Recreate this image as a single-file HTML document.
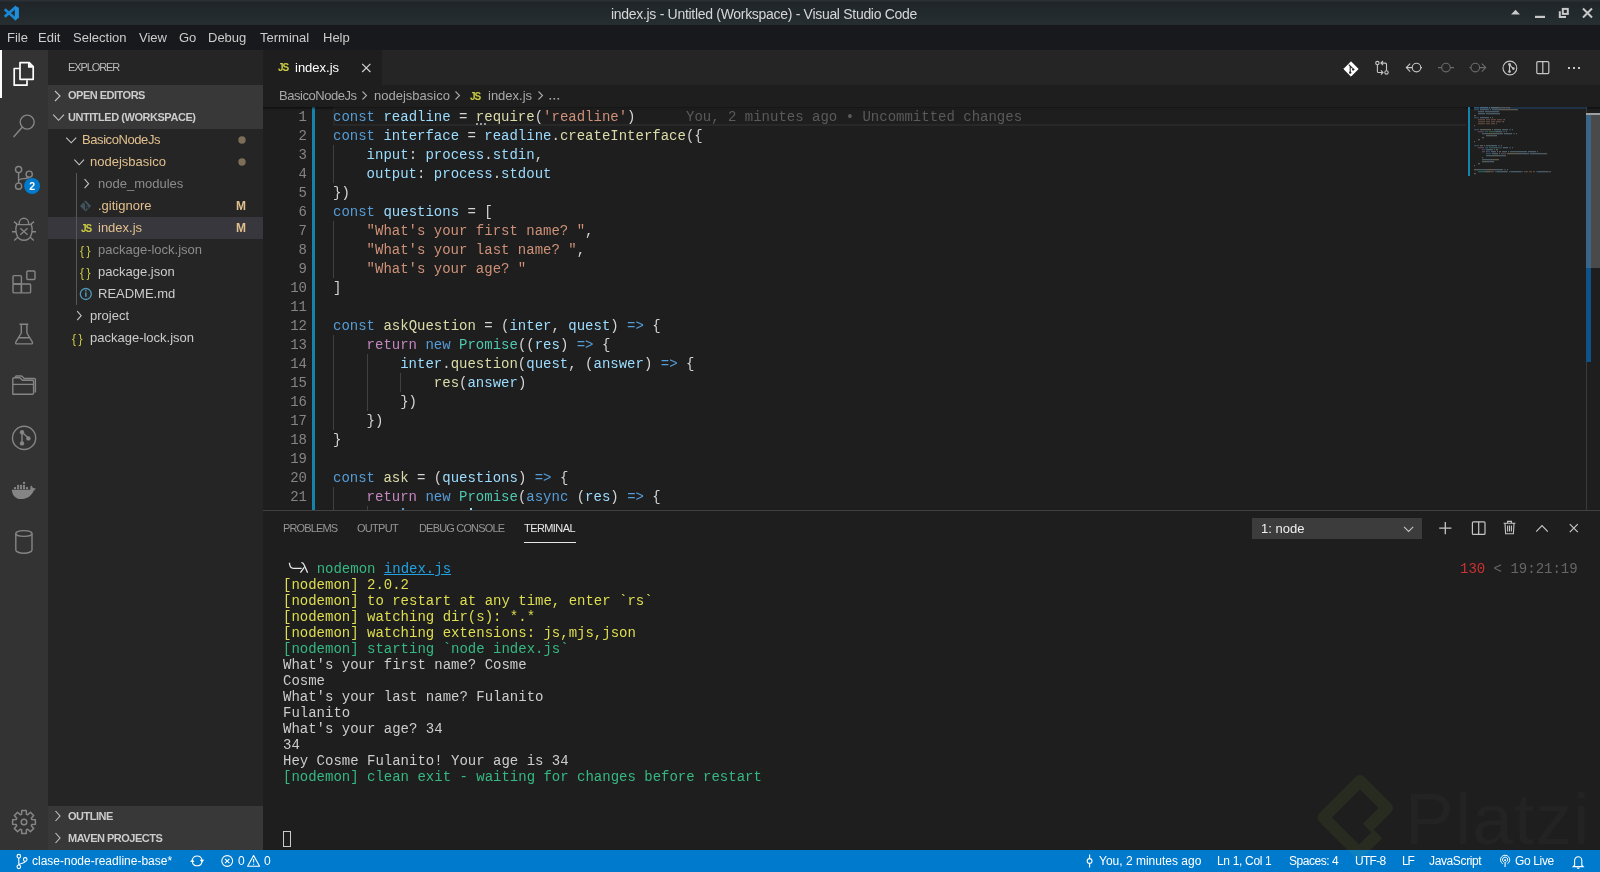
<!DOCTYPE html>
<html><head><meta charset="utf-8">
<style>
*{margin:0;padding:0;box-sizing:border-box}
html,body{width:1600px;height:872px;overflow:hidden;background:#1e1e1e;font-family:"Liberation Sans",sans-serif;color:#ccc}
.a{position:absolute;white-space:pre}
body>div{will-change:transform}
#title{left:0;top:0;width:1600px;height:25px;background:linear-gradient(#2a3035 0,#2a3035 1px,#1f2528 2px,#262e32 100%)}
#menu{left:0;top:25px;width:1600px;height:25px;background:#18191c;font-size:13px;color:#cccccc}
#act{left:0;top:50px;width:48px;height:800px;background:#333333}
#side{left:48px;top:50px;width:215px;height:800px;background:#252526;overflow:hidden}
#tabs{left:263px;top:50px;width:1337px;height:35px;background:#252526}
#crumbs{left:263px;top:85px;width:1337px;height:22px;background:#1e1e1e}
#code{left:263px;top:107px;width:1337px;height:403px;background:#1e1e1e;overflow:hidden}
#panel{left:263px;top:510px;width:1337px;height:340px;background:#1e1e1e;overflow:hidden}
#status{left:0;top:850px;width:1600px;height:22px;background:#007acc;color:#fff;font-size:12px}
.hdr{font-size:11px;font-weight:bold;color:#cccccc}
.row{font-size:13px;line-height:22px;height:22px}
.mod{color:#e2c08d}.ign{color:#8c8c8c}
.ln{position:absolute;left:0;width:44px;text-align:right;color:#858585;font-size:14px;line-height:19px;font-family:"Liberation Mono",monospace}
.cl{position:absolute;left:70px;white-space:pre;font-size:14px;line-height:19px;font-family:"Liberation Mono",monospace;color:#d4d4d4}
.k{color:#569cd6}.v{color:#9cdcfe}.s{color:#ce9178}.f{color:#dcdcaa}.c{color:#c586c0}.t{color:#4ec9b0}
.tl{position:absolute;left:20px;white-space:pre;font-size:14px;line-height:16px;font-family:"Liberation Mono",monospace;color:#cccccc}
.y{color:#dede50}.g{color:#35b882}.bl{color:#22a1e0;text-decoration:underline}
.guide{position:absolute;width:1px;background:#404040}
</style></head><body>
<div id="title" class="a">
<svg class="a" style="left:0;top:0" width="25" height="25"><path d="M5.8 10.2 L15.4 18.8 M5.8 15.8 L15.4 7.4" stroke="#1b86d2" stroke-width="2.7" stroke-linecap="square"/><path d="M14.8 6 L18.9 7.7 V17.9 L14.8 19.8Z" fill="#1f8fdc"/></svg>
<span class="a" style="left:611px;top:6px;font-size:14px;letter-spacing:-0.3px;color:#d6d6d6">index.js - Untitled (Workspace) - Visual Studio Code</span>
<svg class="a" style="left:0;top:0" width="1600" height="25">
<path d="M1511 14.5 L1515.5 9.8 L1520 14.5Z" fill="#c8c8c8"/>
<rect x="1535" y="15.8" width="10" height="2.2" fill="#c8c8c8"/>
<path d="M1558.8 11.3 V18 H1566 V16 H1560.8 V11.3Z" fill="#c8c8c8"/>
<rect x="1562.8" y="8.9" width="5" height="5" fill="none" stroke="#c8c8c8" stroke-width="2"/>
<path d="M1583 8.5 L1592 17.5 M1592 8.5 L1583 17.5" stroke="#c8c8c8" stroke-width="2"/>
</svg>
</div>
<div id="menu" class="a">
<span class="a" style="left:7px;top:5px">File</span><span class="a" style="left:38px;top:5px">Edit</span><span class="a" style="left:73px;top:5px">Selection</span><span class="a" style="left:139px;top:5px">View</span><span class="a" style="left:179px;top:5px">Go</span><span class="a" style="left:208px;top:5px">Debug</span><span class="a" style="left:260px;top:5px">Terminal</span><span class="a" style="left:323px;top:5px">Help</span>
</div>
<div id="act" class="a">
<div class="a" style="left:0;top:0;width:2px;height:48px;background:#ffffff"></div>
<svg class="a" style="left:0;top:-50px" width="48" height="850" fill="none" stroke="#858585" stroke-width="1.4">
<!-- files -->
<g stroke="#ffffff" stroke-width="1.7" stroke-linejoin="round">
<path d="M19.6 68.5 H14.2 V85.2 H27 V80.2"/>
<path d="M20 62.6 H29.2 L33.2 66.6 V79.3 H20 Z"/>
<path d="M28.8 62.8 V66.9 H33"/><path d="M29.6 64.6 V66.1 H31.1Z" fill="#ffffff" stroke-width="0.8"/>
</g>
<!-- search -->
<circle cx="27.2" cy="122.1" r="7"/>
<path d="M22.2 127.3 L14 136.6" stroke-width="1.5" stroke-linecap="round"/>
<!-- scm -->
<circle cx="18.6" cy="169.6" r="3.1"/>
<circle cx="29.2" cy="174.2" r="3.1"/>
<circle cx="18.6" cy="186.2" r="3.1"/>
<path d="M18.6 172.7 V183.1 M18.6 181 C19 178.5 22 178.8 25.5 178.5 C27.5 178.3 28.8 177.8 29.2 177.3"/>
<circle cx="32.1" cy="186" r="8" fill="#007acc" stroke="none"/>
<text x="32.1" y="189.8" fill="#fff" stroke="none" font-size="10.5" font-weight="bold" text-anchor="middle" font-family="Liberation Sans">2</text>
<!-- debug -->
<path d="M19.2 224.4 V223 A4.7 4.7 0 0 1 28.6 223 V224.4"/>
<path d="M16.6 224.6 H31.4 C32.6 229 32 233 31 235.5 C29.6 238.8 27 240.3 24 240.3 C21 240.3 18.4 238.8 17 235.5 C16 233 15.4 229 16.6 224.6Z"/>
<path d="M20.3 228.3 L27.6 234.7 M27.6 228.3 L20.3 234.7"/>
<path d="M14 221.6 L17.4 224.4 M34 221.6 L30.6 224.4 M12 231.7 H16 M32 231.7 H36 M14.2 240.6 L17.8 237.2 M33.8 240.6 L30.2 237.2"/>
<!-- extensions -->
<g stroke-linejoin="round">
<rect x="13" y="275.6" width="8.4" height="8.4" rx="1"/>
<rect x="13" y="284" width="8.4" height="8.9" rx="1"/>
<rect x="21.4" y="284" width="9.2" height="8.9" rx="1"/>
<rect x="26.8" y="271" width="8.2" height="8.5" rx="1"/>
</g>
<!-- flask -->
<path d="M19.5 324.3 H28.2 M21.3 324.3 V333 L15.8 342.2 C15.4 343 15.8 343.9 16.8 343.9 H31.4 C32.4 343.9 32.8 343 32.4 342.2 L26.9 333 V324.3 M18 337.8 H30.2" stroke-linejoin="round"/>
<!-- folder -->
<path d="M12.8 394.3 V379 C12.8 378.3 13.2 377.8 14 377.8 H19.8 L22.4 380.2 H32.4 C33.1 380.2 33.6 380.6 33.6 381.4 V393.1 C33.6 393.8 33.2 394.3 32.4 394.3 Z M12.8 384.4 H33.6" stroke-linejoin="round"/>
<path d="M15.5 377 V376.8 C15.5 376.4 15.8 376 16.4 376 H21.6 L24.2 378.5 H34.2 C34.8 378.5 35.4 379 35.4 379.6 V392.4" stroke-linejoin="round"/>
<!-- git graph -->
<circle cx="24.1" cy="437.9" r="11.6"/>
<path d="M22 432.2 V443.4 M22 432.2 L28.4 437.9" stroke-width="1.4"/>
<circle cx="22" cy="432.2" r="2.2" fill="#858585" stroke="none"/>
<circle cx="22" cy="443.4" r="2.2" fill="#858585" stroke="none"/>
<circle cx="28.4" cy="438.4" r="2.2" fill="#858585" stroke="none"/>
<!-- docker -->
<g fill="#858585" stroke="none">
<path d="M11.8 489.8 H30.2 L30.6 486 C30.8 485.2 31.4 485.2 31.8 486 L33 488.1 L35.6 488.5 C35.8 488.6 35.8 488.9 35.6 489.1 L33.6 491 C31.5 496 27 499.1 21 499.1 C15.5 499.1 12.2 495.5 11.8 489.8Z"/>
<rect x="14" y="487.1" width="2" height="2.1"/><rect x="17" y="487.1" width="2.1" height="2.1"/><rect x="20" y="487.1" width="2.1" height="2.1"/><rect x="23" y="487.1" width="2.1" height="2.1"/><rect x="26" y="487.1" width="2.1" height="2.1"/>
<rect x="17" y="484.9" width="2.1" height="2"/><rect x="20" y="484.9" width="2.1" height="2"/><rect x="23" y="484.9" width="2.1" height="2"/>
<rect x="23" y="481.9" width="2.1" height="2"/>
</g>
<!-- database -->
<ellipse cx="23.9" cy="533.5" rx="8.1" ry="2.9"/>
<path d="M15.8 533.5 V550 C15.8 551.8 19.4 553.2 23.9 553.2 C28.4 553.2 32 551.8 32 550 V533.5"/>
<!-- settings -->
<path d="M21.6 814.2 L21.7 810.6 L26.3 810.6 L26.4 814.2 L27.8 814.7 L30.4 812.3 L33.7 815.6 L31.3 818.2 L31.8 819.6 L35.4 819.7 L35.4 824.3 L31.8 824.4 L31.3 825.8 L33.7 828.4 L30.4 831.7 L27.8 829.3 L26.4 829.8 L26.3 833.4 L21.7 833.4 L21.6 829.8 L20.2 829.3 L17.6 831.7 L14.3 828.4 L16.7 825.8 L16.2 824.4 L12.6 824.3 L12.6 819.7 L16.2 819.6 L16.7 818.2 L14.3 815.6 L17.6 812.3 L20.2 814.7Z" stroke-width="1.5" stroke-linejoin="round"/>
<circle cx="24" cy="822" r="2.8" stroke-width="1.4"/>
</svg>
</div>
<div id="side" class="a">
<span class="a" style="left:20px;top:11px;font-size:11px;letter-spacing:-1.1px;color:#bbbbbb">EXPLORER</span>
<div class="a" style="left:0;top:35px;width:215px;height:44px;background:#383838"></div>
<svg class="a" style="left:0;top:0" width="215" height="800" fill="none" stroke="#c5c5c5" stroke-width="1.1">
<path d="M7 41 L12 46 L7 51"/>
<path d="M5.2 64.7 L10.6 70.3 L16 64.7"/>
<path d="M18.2 87.6 L23.2 92.8 L28.2 87.6"/>
<path d="M26.4 109.6 L31.2 114.8 L36 109.6"/>
<path d="M36.6 129.2 L40.6 133.7 L36.6 138.2"/>
<path d="M29.2 261.2 L33.2 265.7 L29.2 270.2"/>
<circle cx="194" cy="90" r="3.7" fill="#7c6e58" stroke="none"/>
<circle cx="194" cy="112" r="3.7" fill="#7c6e58" stroke="none"/>
</svg>
<span class="a hdr" style="left:20px;top:39px;letter-spacing:-0.5px">OPEN EDITORS</span>
<span class="a hdr" style="left:20px;top:61px;letter-spacing:-0.46px">UNTITLED (WORKSPACE)</span>
<div class="a" style="left:0;top:167px;width:215px;height:22px;background:#37373d"></div>
<div class="a" style="left:28px;top:123px;width:1px;height:132px;background:#585858"></div>
<span class="a row mod" style="left:34px;top:79px;letter-spacing:-0.42px">BasicoNodeJs</span>
<span class="a row mod" style="left:42px;top:101px">nodejsbasico</span>
<span class="a row ign" style="left:50px;top:123px">node_modules</span>
<span class="a row mod" style="left:50px;top:145px">.gitignore</span>
<span class="a row mod" style="left:50px;top:167px">index.js</span>
<span class="a row ign" style="left:50px;top:189px">package-lock.json</span>
<span class="a row" style="left:50px;top:211px">package.json</span>
<span class="a row" style="left:50px;top:233px">README.md</span>
<span class="a row" style="left:42px;top:255px">project</span>
<span class="a row" style="left:42px;top:277px">package-lock.json</span>
<span class="a mod" style="left:188px;top:149px;font-size:12px;font-weight:bold">M</span>
<span class="a mod" style="left:188px;top:171px;font-size:12px;font-weight:bold">M</span>
<svg class="a" style="left:0;top:0" width="215" height="800">
<path d="M32 156 L37.6 150.4 L43.2 156 L37.6 161.6Z" fill="#41535b"/>
<path d="M36 152.4 L39.6 156 M37.6 154 V159.4" stroke="#252526" stroke-width="1.1"/>
<circle cx="39.4" cy="157.6" r="1.1" fill="#252526"/>
<circle cx="37.8" cy="244" r="5.5" fill="none" stroke="#519aba" stroke-width="1.3"/>
<rect x="37.1" y="242.4" width="1.5" height="4.4" fill="#519aba"/><rect x="37.1" y="240.1" width="1.5" height="1.4" fill="#519aba"/>
</svg>
<span class="a" style="left:33px;top:173px;font-size:10px;font-weight:bold;color:#cbcb41;letter-spacing:-1px">JS</span>
<span class="a" style="left:32px;top:194px;font-size:12px;color:#cbcb41;letter-spacing:2.5px">{}</span>
<span class="a" style="left:32px;top:216px;font-size:12px;color:#cbcb41;letter-spacing:2.5px">{}</span>
<span class="a" style="left:24px;top:282px;font-size:12px;color:#cbcb41;letter-spacing:2.5px">{}</span>
<div class="a" style="left:0;top:756px;width:215px;height:44px;background:#383838"></div>
<svg class="a" style="left:0;top:0" width="215" height="800" fill="none" stroke="#c5c5c5" stroke-width="1.1">
<path d="M7.5 761 L12 766 L7.5 771"/>
<path d="M7.5 783 L12 788 L7.5 793"/>
</svg>
<span class="a hdr" style="left:20px;top:760px;letter-spacing:-0.5px">OUTLINE</span>
<span class="a hdr" style="left:20px;top:782px;letter-spacing:-0.5px">MAVEN PROJECTS</span>
</div>
<!--EDITOR--><div id="tabs" class="a">
<div class="a" style="left:0;top:0;width:119px;height:35px;background:#1e1e1e"></div>
<span class="a" style="left:15px;top:62px;font-size:10px;font-weight:bold;color:#cbcb41;letter-spacing:-1px;top:12px">JS</span>
<span class="a" style="left:32px;top:10px;font-size:13px;color:#ffffff">index.js</span>
<svg class="a" style="left:0;top:0" width="1337" height="35" fill="none" stroke="#c5c5c5" stroke-width="1.2">
<path d="M99.2 13.8 L107.4 22 M107.4 13.8 L99.2 22" stroke="#d0d0d0"/>
<!-- git diamond -->
<path d="M1088 11.8 L1095.2 19 L1088 26.2 L1080.8 19Z" fill="#ffffff" stroke="#ffffff" stroke-width="1" stroke-linejoin="round"/>
<path d="M1085.8 14.6 L1089.6 18.4 M1087.2 16 V22.6" stroke="#252526" stroke-width="1.1"/>
<circle cx="1087.2" cy="22.6" r="1.2" fill="#252526" stroke="none"/><circle cx="1090.2" cy="19.4" r="1.2" fill="#252526" stroke="none"/>
<!-- compare -->
<g stroke="#c5c5c5" stroke-width="1.1">
<circle cx="1114.4" cy="13.1" r="1.7"/>
<path d="M1114.4 14.8 V21.4 Q1114.4 22.5 1115.5 22.5 H1120 M1117.9 20.4 L1120 22.5 L1117.9 24.6"/>
<circle cx="1123.5" cy="22.4" r="1.7"/>
<path d="M1123.5 20.7 V14.2 Q1123.5 13.1 1122.4 13.1 H1117.9 M1120 11 L1117.9 13.1 L1120 15.2"/>
</g>
<!-- prev -->
<g stroke="#c5c5c5" stroke-width="1.1">
<circle cx="1153.5" cy="17.6" r="4.3"/>
<path d="M1149.2 17.6 H1143.4 M1147.2 13.6 L1143.3 17.6 L1147.2 21.6 M1157.8 17.6 H1159"/>
</g>
<g stroke="#6b6b6b" stroke-width="1.1">
<circle cx="1183" cy="17.6" r="4.3"/>
<path d="M1175 17.6 H1178.7 M1187.3 17.6 H1191"/>
<circle cx="1212.3" cy="17.6" r="4.3"/>
<path d="M1206.5 17.6 H1208 M1216.6 17.6 H1222.6 M1218.8 13.6 L1222.7 17.6 L1218.8 21.6"/>
</g>
<g stroke="#c5c5c5" stroke-width="1.1">
<circle cx="1246.9" cy="18" r="6.9"/>
<path d="M1246.5 14.6 V21.6 M1246.5 14.6 L1250.2 18.6"/>
</g>
<circle cx="1246.5" cy="14.4" r="1.3" fill="#c5c5c5" stroke="none"/><circle cx="1246.5" cy="21.6" r="1.3" fill="#c5c5c5" stroke="none"/><circle cx="1250.4" cy="18.6" r="1.3" fill="#c5c5c5" stroke="none"/>
<rect x="1273.8" y="11.6" width="12" height="12" rx="1" stroke="#c5c5c5" stroke-width="1.2"/>
<path d="M1279.8 11.6 V23.6" stroke="#c5c5c5" stroke-width="1.2"/>
<g fill="#c5c5c5" stroke="none"><rect x="1305" y="17" width="2" height="2"/><rect x="1310" y="17" width="2" height="2"/><rect x="1315" y="17" width="2" height="2"/></g>
</svg>
</div>
<div id="crumbs" class="a">
<span class="a" style="left:16px;top:3px;font-size:13px;color:#a9a9a9;letter-spacing:-0.46px">BasicoNodeJs</span>
<span class="a" style="left:111px;top:3px;font-size:13px;color:#a9a9a9">nodejsbasico</span>
<span class="a" style="left:207px;top:6px;font-size:10px;font-weight:bold;color:#cbcb41;letter-spacing:-1px">JS</span>
<span class="a" style="left:225px;top:3px;font-size:13px;color:#a9a9a9">index.js</span>
<svg class="a" style="left:0;top:0" width="400" height="22" fill="none" stroke="#a9a9a9" stroke-width="1.1">
<path d="M99.5 6.5 L103.5 10.5 L99.5 14.5 M192.5 6.5 L196.5 10.5 L192.5 14.5 M275.5 6.5 L279.5 10.5 L275.5 14.5"/>
<g fill="#a9a9a9" stroke="none"><rect x="286.5" y="13" width="1.6" height="1.6"/><rect x="290.5" y="13" width="1.6" height="1.6"/><rect x="294.5" y="13" width="1.6" height="1.6"/></g>
</svg>
</div>
<div id="code" class="a">
<div class="a" style="left:70px;top:0;width:1133px;height:19px;border:2px solid #282828;border-right:none"></div>
<div class="a" style="left:49px;top:0;width:3px;height:403px;background:#1683aa"></div>
<span class="a" style="left:423px;top:1px;font-size:14px;line-height:19px;font-family:'Liberation Mono',monospace;color:#5a5a5a">You, 2 minutes ago • Uncommitted changes</span>
<div class="a" style="left:213px;top:16px;width:2px;height:2px;background:#9a9a9a"></div><div class="a" style="left:217px;top:16px;width:2px;height:2px;background:#9a9a9a"></div><div class="a" style="left:221px;top:16px;width:2px;height:2px;background:#9a9a9a"></div>
<span class="ln" style="top:1px">1</span>
<span class="cl" style="top:1px"><span class="k">const</span> <span class="v">readline</span> = <span class="f">require</span>(<span class="s">&#x27;readline&#x27;</span>)</span>
<span class="ln" style="top:20px">2</span>
<span class="cl" style="top:20px"><span class="k">const</span> <span class="v">interface</span> = <span class="v">readline</span>.<span class="f">createInterface</span>({</span>
<span class="ln" style="top:39px">3</span>
<span class="cl" style="top:39px">    <span class="v">input</span>: <span class="v">process</span>.<span class="v">stdin</span>,</span>
<span class="ln" style="top:58px">4</span>
<span class="cl" style="top:58px">    <span class="v">output</span>: <span class="v">process</span>.<span class="v">stdout</span></span>
<span class="ln" style="top:77px">5</span>
<span class="cl" style="top:77px">})</span>
<span class="ln" style="top:96px">6</span>
<span class="cl" style="top:96px"><span class="k">const</span> <span class="v">questions</span> = [</span>
<span class="ln" style="top:115px">7</span>
<span class="cl" style="top:115px">    <span class="s">&quot;What&#x27;s your first name? &quot;</span>,</span>
<span class="ln" style="top:134px">8</span>
<span class="cl" style="top:134px">    <span class="s">&quot;What&#x27;s your last name? &quot;</span>,</span>
<span class="ln" style="top:153px">9</span>
<span class="cl" style="top:153px">    <span class="s">&quot;What&#x27;s your age? &quot;</span></span>
<span class="ln" style="top:172px">10</span>
<span class="cl" style="top:172px">]</span>
<span class="ln" style="top:191px">11</span>
<span class="ln" style="top:210px">12</span>
<span class="cl" style="top:210px"><span class="k">const</span> <span class="f">askQuestion</span> = (<span class="v">inter</span>, <span class="v">quest</span>) <span class="k">=&gt;</span> {</span>
<span class="ln" style="top:229px">13</span>
<span class="cl" style="top:229px">    <span class="c">return</span> <span class="k">new</span> <span class="t">Promise</span>((<span class="v">res</span>) <span class="k">=&gt;</span> {</span>
<span class="ln" style="top:248px">14</span>
<span class="cl" style="top:248px">        <span class="v">inter</span>.<span class="f">question</span>(<span class="v">quest</span>, (<span class="v">answer</span>) <span class="k">=&gt;</span> {</span>
<span class="ln" style="top:267px">15</span>
<span class="cl" style="top:267px">            <span class="f">res</span>(<span class="v">answer</span>)</span>
<span class="ln" style="top:286px">16</span>
<span class="cl" style="top:286px">        })</span>
<span class="ln" style="top:305px">17</span>
<span class="cl" style="top:305px">    })</span>
<span class="ln" style="top:324px">18</span>
<span class="cl" style="top:324px">}</span>
<span class="ln" style="top:343px">19</span>
<span class="ln" style="top:362px">20</span>
<span class="cl" style="top:362px"><span class="k">const</span> <span class="f">ask</span> = (<span class="v">questions</span>) <span class="k">=&gt;</span> {</span>
<span class="ln" style="top:381px">21</span>
<span class="cl" style="top:381px">    <span class="c">return</span> <span class="k">new</span> <span class="t">Promise</span>(<span class="k">async</span> (<span class="v">res</span>) <span class="k">=&gt;</span> {</span>
<span class="ln" style="top:400px">22</span>
<div class="a" style="left:139px;top:401px;width:2px;height:2px;background:#569cd6"></div><div class="a" style="left:207px;top:401px;width:2px;height:2px;background:#9cdcfe"></div>
<div class="guide" style="left:70px;top:38px;height:38px"></div>
<div class="guide" style="left:70px;top:114px;height:57px"></div>
<div class="guide" style="left:70px;top:228px;height:95px"></div>
<div class="guide" style="left:104px;top:247px;height:57px"></div>
<div class="guide" style="left:137px;top:266px;height:19px"></div>
<div class="guide" style="left:70px;top:380px;height:38px"></div>
<div class="guide" style="left:104px;top:399px;height:19px"></div>
<div class="a" style="left:0;top:0;width:1337px;height:3px;background:linear-gradient(rgba(0,0,0,0.55),rgba(0,0,0,0))"></div>
<div class="a" style="left:1205px;top:0;width:2px;height:69px;background:#1683aa"></div>
<div class="a" style="left:1211px;top:0;width:112px;height:2px;background:#264f78;opacity:0.5"></div>
<svg class="a" style="left:1211px;top:0" width="112" height="80"><g opacity="0.32"><rect x="0" y="0" width="5" height="1.3" fill="#569cd6"/><rect x="6" y="0" width="8" height="1.3" fill="#9cdcfe"/><rect x="15" y="0" width="1" height="1.3" fill="#d4d4d4"/><rect x="17" y="0" width="7" height="1.3" fill="#dcdcaa"/><rect x="24" y="0" width="1" height="1.3" fill="#d4d4d4"/><rect x="25" y="0" width="10" height="1.3" fill="#ce9178"/><rect x="35" y="0" width="1" height="1.3" fill="#d4d4d4"/><rect x="0" y="2" width="5" height="1.3" fill="#569cd6"/><rect x="6" y="2" width="9" height="1.3" fill="#9cdcfe"/><rect x="16" y="2" width="1" height="1.3" fill="#d4d4d4"/><rect x="18" y="2" width="8" height="1.3" fill="#9cdcfe"/><rect x="26" y="2" width="1" height="1.3" fill="#d4d4d4"/><rect x="27" y="2" width="15" height="1.3" fill="#dcdcaa"/><rect x="42" y="2" width="2" height="1.3" fill="#d4d4d4"/><rect x="4" y="4" width="5" height="1.3" fill="#9cdcfe"/><rect x="9" y="4" width="1" height="1.3" fill="#d4d4d4"/><rect x="11" y="4" width="7" height="1.3" fill="#9cdcfe"/><rect x="18" y="4" width="1" height="1.3" fill="#d4d4d4"/><rect x="19" y="4" width="5" height="1.3" fill="#9cdcfe"/><rect x="24" y="4" width="1" height="1.3" fill="#d4d4d4"/><rect x="4" y="6" width="6" height="1.3" fill="#9cdcfe"/><rect x="10" y="6" width="1" height="1.3" fill="#d4d4d4"/><rect x="12" y="6" width="7" height="1.3" fill="#9cdcfe"/><rect x="19" y="6" width="1" height="1.3" fill="#d4d4d4"/><rect x="20" y="6" width="6" height="1.3" fill="#9cdcfe"/><rect x="0" y="8" width="2" height="1.3" fill="#d4d4d4"/><rect x="0" y="10" width="5" height="1.3" fill="#569cd6"/><rect x="6" y="10" width="9" height="1.3" fill="#9cdcfe"/><rect x="16" y="10" width="1" height="1.3" fill="#d4d4d4"/><rect x="18" y="10" width="1" height="1.3" fill="#d4d4d4"/><rect x="4" y="12" width="7" height="1.3" fill="#ce9178"/><rect x="12" y="12" width="4" height="1.3" fill="#ce9178"/><rect x="17" y="12" width="5" height="1.3" fill="#ce9178"/><rect x="23" y="12" width="5" height="1.3" fill="#ce9178"/><rect x="29" y="12" width="1" height="1.3" fill="#ce9178"/><rect x="30" y="12" width="1" height="1.3" fill="#d4d4d4"/><rect x="4" y="14" width="7" height="1.3" fill="#ce9178"/><rect x="12" y="14" width="4" height="1.3" fill="#ce9178"/><rect x="17" y="14" width="4" height="1.3" fill="#ce9178"/><rect x="22" y="14" width="5" height="1.3" fill="#ce9178"/><rect x="28" y="14" width="1" height="1.3" fill="#ce9178"/><rect x="29" y="14" width="1" height="1.3" fill="#d4d4d4"/><rect x="4" y="16" width="7" height="1.3" fill="#ce9178"/><rect x="12" y="16" width="4" height="1.3" fill="#ce9178"/><rect x="17" y="16" width="4" height="1.3" fill="#ce9178"/><rect x="22" y="16" width="1" height="1.3" fill="#ce9178"/><rect x="0" y="18" width="1" height="1.3" fill="#d4d4d4"/><rect x="0" y="22" width="5" height="1.3" fill="#569cd6"/><rect x="6" y="22" width="11" height="1.3" fill="#dcdcaa"/><rect x="18" y="22" width="1" height="1.3" fill="#d4d4d4"/><rect x="20" y="22" width="1" height="1.3" fill="#d4d4d4"/><rect x="21" y="22" width="5" height="1.3" fill="#9cdcfe"/><rect x="26" y="22" width="1" height="1.3" fill="#d4d4d4"/><rect x="28" y="22" width="5" height="1.3" fill="#9cdcfe"/><rect x="33" y="22" width="1" height="1.3" fill="#d4d4d4"/><rect x="35" y="22" width="2" height="1.3" fill="#569cd6"/><rect x="38" y="22" width="1" height="1.3" fill="#d4d4d4"/><rect x="4" y="24" width="6" height="1.3" fill="#c586c0"/><rect x="11" y="24" width="3" height="1.3" fill="#569cd6"/><rect x="15" y="24" width="7" height="1.3" fill="#4ec9b0"/><rect x="22" y="24" width="2" height="1.3" fill="#d4d4d4"/><rect x="24" y="24" width="3" height="1.3" fill="#9cdcfe"/><rect x="27" y="24" width="1" height="1.3" fill="#d4d4d4"/><rect x="29" y="24" width="2" height="1.3" fill="#569cd6"/><rect x="32" y="24" width="1" height="1.3" fill="#d4d4d4"/><rect x="8" y="26" width="5" height="1.3" fill="#9cdcfe"/><rect x="13" y="26" width="1" height="1.3" fill="#d4d4d4"/><rect x="14" y="26" width="8" height="1.3" fill="#dcdcaa"/><rect x="22" y="26" width="1" height="1.3" fill="#d4d4d4"/><rect x="23" y="26" width="5" height="1.3" fill="#9cdcfe"/><rect x="28" y="26" width="1" height="1.3" fill="#d4d4d4"/><rect x="30" y="26" width="1" height="1.3" fill="#d4d4d4"/><rect x="31" y="26" width="6" height="1.3" fill="#9cdcfe"/><rect x="37" y="26" width="1" height="1.3" fill="#d4d4d4"/><rect x="39" y="26" width="2" height="1.3" fill="#569cd6"/><rect x="42" y="26" width="1" height="1.3" fill="#d4d4d4"/><rect x="12" y="28" width="3" height="1.3" fill="#dcdcaa"/><rect x="15" y="28" width="1" height="1.3" fill="#d4d4d4"/><rect x="16" y="28" width="6" height="1.3" fill="#9cdcfe"/><rect x="22" y="28" width="1" height="1.3" fill="#d4d4d4"/><rect x="8" y="30" width="2" height="1.3" fill="#d4d4d4"/><rect x="4" y="32" width="2" height="1.3" fill="#d4d4d4"/><rect x="0" y="34" width="1" height="1.3" fill="#d4d4d4"/><rect x="0" y="38" width="5" height="1.3" fill="#569cd6"/><rect x="6" y="38" width="3" height="1.3" fill="#dcdcaa"/><rect x="10" y="38" width="1" height="1.3" fill="#d4d4d4"/><rect x="12" y="38" width="1" height="1.3" fill="#d4d4d4"/><rect x="13" y="38" width="9" height="1.3" fill="#9cdcfe"/><rect x="22" y="38" width="1" height="1.3" fill="#d4d4d4"/><rect x="24" y="38" width="2" height="1.3" fill="#569cd6"/><rect x="27" y="38" width="1" height="1.3" fill="#d4d4d4"/><rect x="4" y="40" width="6" height="1.3" fill="#c586c0"/><rect x="11" y="40" width="3" height="1.3" fill="#569cd6"/><rect x="15" y="40" width="7" height="1.3" fill="#4ec9b0"/><rect x="22" y="40" width="1" height="1.3" fill="#d4d4d4"/><rect x="23" y="40" width="5" height="1.3" fill="#569cd6"/><rect x="29" y="40" width="1" height="1.3" fill="#d4d4d4"/><rect x="30" y="40" width="3" height="1.3" fill="#9cdcfe"/><rect x="33" y="40" width="1" height="1.3" fill="#d4d4d4"/><rect x="35" y="40" width="2" height="1.3" fill="#569cd6"/><rect x="38" y="40" width="1" height="1.3" fill="#d4d4d4"/><rect x="8" y="42" width="3" height="1.3" fill="#569cd6"/><rect x="12" y="42" width="7" height="1.3" fill="#9cdcfe"/><rect x="20" y="42" width="1" height="1.3" fill="#d4d4d4"/><rect x="22" y="42" width="2" height="1.3" fill="#d4d4d4"/><rect x="8" y="44" width="3" height="1.3" fill="#c586c0"/><rect x="12" y="44" width="1" height="1.3" fill="#d4d4d4"/><rect x="13" y="44" width="3" height="1.3" fill="#569cd6"/><rect x="17" y="44" width="5" height="1.3" fill="#9cdcfe"/><rect x="23" y="44" width="1" height="1.3" fill="#d4d4d4"/><rect x="25" y="44" width="1" height="1.3" fill="#d4d4d4"/><rect x="26" y="44" width="1" height="1.3" fill="#d4d4d4"/><rect x="28" y="44" width="5" height="1.3" fill="#9cdcfe"/><rect x="34" y="44" width="1" height="1.3" fill="#d4d4d4"/><rect x="36" y="44" width="9" height="1.3" fill="#9cdcfe"/><rect x="45" y="44" width="1" height="1.3" fill="#d4d4d4"/><rect x="46" y="44" width="6" height="1.3" fill="#9cdcfe"/><rect x="52" y="44" width="1" height="1.3" fill="#d4d4d4"/><rect x="54" y="44" width="5" height="1.3" fill="#9cdcfe"/><rect x="59" y="44" width="3" height="1.3" fill="#d4d4d4"/><rect x="63" y="44" width="1" height="1.3" fill="#d4d4d4"/><rect x="12" y="46" width="5" height="1.3" fill="#569cd6"/><rect x="18" y="46" width="6" height="1.3" fill="#9cdcfe"/><rect x="25" y="46" width="1" height="1.3" fill="#d4d4d4"/><rect x="27" y="46" width="5" height="1.3" fill="#c586c0"/><rect x="33" y="46" width="11" height="1.3" fill="#dcdcaa"/><rect x="44" y="46" width="1" height="1.3" fill="#d4d4d4"/><rect x="45" y="46" width="9" height="1.3" fill="#9cdcfe"/><rect x="54" y="46" width="1" height="1.3" fill="#d4d4d4"/><rect x="56" y="46" width="9" height="1.3" fill="#9cdcfe"/><rect x="65" y="46" width="1" height="1.3" fill="#d4d4d4"/><rect x="66" y="46" width="5" height="1.3" fill="#9cdcfe"/><rect x="71" y="46" width="2" height="1.3" fill="#d4d4d4"/><rect x="12" y="48" width="7" height="1.3" fill="#9cdcfe"/><rect x="19" y="48" width="1" height="1.3" fill="#d4d4d4"/><rect x="20" y="48" width="4" height="1.3" fill="#dcdcaa"/><rect x="24" y="48" width="1" height="1.3" fill="#d4d4d4"/><rect x="25" y="48" width="6" height="1.3" fill="#9cdcfe"/><rect x="31" y="48" width="1" height="1.3" fill="#d4d4d4"/><rect x="8" y="50" width="1" height="1.3" fill="#d4d4d4"/><rect x="8" y="52" width="9" height="1.3" fill="#9cdcfe"/><rect x="17" y="52" width="1" height="1.3" fill="#d4d4d4"/><rect x="18" y="52" width="5" height="1.3" fill="#dcdcaa"/><rect x="23" y="52" width="2" height="1.3" fill="#d4d4d4"/><rect x="8" y="54" width="3" height="1.3" fill="#dcdcaa"/><rect x="11" y="54" width="1" height="1.3" fill="#d4d4d4"/><rect x="12" y="54" width="7" height="1.3" fill="#9cdcfe"/><rect x="19" y="54" width="1" height="1.3" fill="#d4d4d4"/><rect x="4" y="56" width="2" height="1.3" fill="#d4d4d4"/><rect x="0" y="58" width="1" height="1.3" fill="#d4d4d4"/><rect x="0" y="62" width="3" height="1.3" fill="#dcdcaa"/><rect x="3" y="62" width="1" height="1.3" fill="#d4d4d4"/><rect x="4" y="62" width="9" height="1.3" fill="#9cdcfe"/><rect x="13" y="62" width="2" height="1.3" fill="#d4d4d4"/><rect x="15" y="62" width="4" height="1.3" fill="#dcdcaa"/><rect x="19" y="62" width="2" height="1.3" fill="#d4d4d4"/><rect x="21" y="62" width="7" height="1.3" fill="#9cdcfe"/><rect x="28" y="62" width="1" height="1.3" fill="#d4d4d4"/><rect x="30" y="62" width="2" height="1.3" fill="#569cd6"/><rect x="33" y="62" width="1" height="1.3" fill="#d4d4d4"/><rect x="4" y="64" width="7" height="1.3" fill="#4ec9b0"/><rect x="11" y="64" width="1" height="1.3" fill="#d4d4d4"/><rect x="12" y="64" width="3" height="1.3" fill="#dcdcaa"/><rect x="15" y="64" width="1" height="1.3" fill="#d4d4d4"/><rect x="16" y="64" width="4" height="1.3" fill="#ce9178"/><rect x="21" y="64" width="2" height="1.3" fill="#569cd6"/><rect x="23" y="64" width="7" height="1.3" fill="#9cdcfe"/><rect x="30" y="64" width="1" height="1.3" fill="#d4d4d4"/><rect x="31" y="64" width="1" height="1.3" fill="#d4d4d4"/><rect x="32" y="64" width="1" height="1.3" fill="#d4d4d4"/><rect x="33" y="64" width="1" height="1.3" fill="#569cd6"/><rect x="35" y="64" width="2" height="1.3" fill="#569cd6"/><rect x="37" y="64" width="10" height="1.3" fill="#9cdcfe"/><rect x="47" y="64" width="1" height="1.3" fill="#569cd6"/><rect x="48" y="64" width="1" height="1.3" fill="#ce9178"/><rect x="50" y="64" width="4" height="1.3" fill="#ce9178"/><rect x="55" y="64" width="3" height="1.3" fill="#ce9178"/><rect x="59" y="64" width="2" height="1.3" fill="#ce9178"/><rect x="62" y="64" width="2" height="1.3" fill="#569cd6"/><rect x="64" y="64" width="10" height="1.3" fill="#9cdcfe"/><rect x="74" y="64" width="1" height="1.3" fill="#569cd6"/><rect x="75" y="64" width="1" height="1.3" fill="#ce9178"/><rect x="76" y="64" width="1" height="1.3" fill="#d4d4d4"/><rect x="0" y="66" width="2" height="1.3" fill="#d4d4d4"/></g></svg>
<div class="a" style="left:1323px;top:0;width:1px;height:403px;background:#3a3a3a"></div>
<div class="a" style="left:1328px;top:6px;width:9px;height:155px;background:#4a4a4a"></div>
<div class="a" style="left:1323px;top:6px;width:5px;height:249px;background:#0e5288"></div>
<div class="a" style="left:1323px;top:6px;width:5px;height:155px;background:#3a6586"></div>
<div class="a" style="left:1323px;top:6px;width:14px;height:2px;background:#a0a0a0"></div>
</div>
<!--/EDITOR-->
<!--PANEL--><div id="panel" class="a">
<div class="a" style="left:0;top:0;width:1337px;height:1px;background:#414141"></div>
<span class="a" style="left:20px;top:12px;font-size:11px;color:#969696;letter-spacing:-0.85px">PROBLEMS</span>
<span class="a" style="left:94px;top:12px;font-size:11px;color:#969696;letter-spacing:-0.72px">OUTPUT</span>
<span class="a" style="left:156px;top:12px;font-size:11px;color:#969696;letter-spacing:-0.82px">DEBUG CONSOLE</span>
<span class="a" style="left:261px;top:12px;font-size:11px;color:#e7e7e7;letter-spacing:-0.58px">TERMINAL</span>
<div class="a" style="left:261px;top:32px;width:52px;height:1px;background:#e7e7e7"></div>
<div class="a" style="left:989px;top:8px;width:170px;height:21px;background:#3c3c3c"></div>
<span class="a" style="left:998px;top:11px;font-size:13px;color:#f0f0f0">1: node</span>
<svg class="a" style="left:0;top:0" width="1337" height="40" fill="none" stroke="#c5c5c5" stroke-width="1.1">
<path d="M1141 16.8 L1145.6 21.4 L1150.2 16.8"/>
<path d="M1182.3 12 V24.2 M1176.2 18.1 H1188.4" stroke-width="1.3"/>
<rect x="1209.4" y="11.8" width="12.6" height="12.6" rx="1" stroke-width="1.2"/>
<path d="M1215.7 11.8 V24.4" stroke-width="1.2"/>
<path d="M1240.6 13.2 H1252.4 M1244.6 13.2 V11.4 H1248.4 V13.2 M1242 13.4 L1242.6 23.8 H1250.4 L1251 13.4 M1244.6 15.6 V21.6 M1246.5 15.6 V21.6 M1248.4 15.6 V21.6" stroke-width="1.1"/>
<path d="M1273.2 21.6 L1279 15.6 L1284.8 21.6" stroke-width="1.2"/>
<path d="M1306.8 14.2 L1314.8 22.2 M1314.8 14.2 L1306.8 22.2" stroke-width="1.2"/>
</svg>
<span class="tl" style="top:51px"><span style="color:#e0e0e0">  </span>  <span class="g">nodemon</span> <span class="bl">index.js</span></span>
<span class="tl" style="top:67px"><span class="y">[nodemon] 2.0.2</span></span>
<span class="tl" style="top:83px"><span class="y">[nodemon] to restart at any time, enter `rs`</span></span>
<span class="tl" style="top:99px"><span class="y">[nodemon] watching dir(s): *.*</span></span>
<span class="tl" style="top:115px"><span class="y">[nodemon] watching extensions: js,mjs,json</span></span>
<span class="tl" style="top:131px"><span class="g">[nodemon] starting `node index.js`</span></span>
<span class="tl" style="top:147px">What's your first name? Cosme</span>
<span class="tl" style="top:163px">Cosme</span>
<span class="tl" style="top:179px">What's your last name? Fulanito</span>
<span class="tl" style="top:195px">Fulanito</span>
<span class="tl" style="top:211px">What's your age? 34</span>
<span class="tl" style="top:227px">34</span>
<span class="tl" style="top:243px">Hey Cosme Fulanito! Your age is 34</span>
<span class="tl" style="top:259px"><span class="g">[nodemon] clean exit - waiting for changes before restart</span></span>
<span class="tl" style="left:1197px;top:51px"><span style="color:#cd3131">130</span><span style="color:#666666"> &lt; 19:21:19</span></span>
<svg class="a" style="left:20px;top:51px" width="30" height="16" fill="none" stroke="#e8e8e8" stroke-width="1.3"><path d="M6.4 1.7 C6.6 5.5 7.5 7.3 10.6 7.3 H18.6"/><path d="M18.4 1.6 C20 1.3 20.6 2.5 21.2 4 L24.6 11.7 M21.2 6.4 L17.4 11.7"/></svg>
<div class="a" style="left:20px;top:321px;width:8px;height:16px;border:1px solid #cccccc"></div>
</div>
<svg class="a" style="left:1290px;top:760px;z-index:5" width="310" height="112">
<g transform="translate(-1290,-760)" fill="none" stroke="rgba(152,202,63,0.085)" stroke-width="12" stroke-linejoin="round"><path d="M1367 828 L1387 808 L1360 781 L1323.5 817.5 L1359 853 L1378 834"/></g>
</svg>
<span class="a" style="left:1405px;top:777px;font-size:73px;color:rgba(255,255,255,0.025);letter-spacing:1.2px;z-index:5">Platzi</span>
<div id="status" class="a">
<svg class="a" style="left:0;top:0" width="1600" height="22" fill="none" stroke="#ffffff" stroke-width="1.1">
<circle cx="18.8" cy="6.2" r="1.8"/><circle cx="18.8" cy="16.8" r="1.8"/><circle cx="25.2" cy="9.4" r="1.8"/>
<path d="M18.8 8 V15 M25.2 11.2 C25.2 13.5 19.5 12.8 18.8 15"/>
<path d="M192.3 10.2 A4.9 4.9 0 0 1 202 10.2 M202 11.6 A4.9 4.9 0 0 1 192.3 11.6" stroke-width="1.1"/><path d="M199.8 9.8 H204.2 L202 12.8Z M190.1 12 H194.5 L192.3 9Z" fill="#fff" stroke="none"/>
<circle cx="227.2" cy="11" r="5.4"/>
<path d="M225 8.8 L229.4 13.2 M229.4 8.8 L225 13.2"/>
<path d="M253.6 5.4 L259.6 16.2 H247.6 Z M253.6 9 V12.6 M253.6 13.8 V14.8" stroke-linejoin="round"/>
<path d="M1089.6 4.6 V8.6 M1089.6 13.4 V17.4"/><circle cx="1089.6" cy="11" r="2.4"/>
<path d="M1502.8 13.8 A4.6 4.6 0 1 1 1507.4 13.8 M1503.9 12 A2.6 2.6 0 1 1 1506.3 12" stroke-width="1"/>
<circle cx="1505.1" cy="10.3" r="1" fill="#fff" stroke="none"/>
<path d="M1505.1 12 V17"/>
<path d="M1574.6 15.2 V10.4 A3.6 3.6 0 0 1 1581.8 10.4 V15.2 L1583.2 16.6 H1573.2 Z M1577 17.6 A1.3 1.3 0 0 0 1579.4 17.6"/>
</svg>
<span class="a" style="left:32px;top:4px">clase-node-readline-base*</span>
<span class="a" style="left:238px;top:4px">0</span>
<span class="a" style="left:264px;top:4px">0</span>
<span class="a" style="left:1099px;top:4px">You, 2 minutes ago</span>
<span class="a" style="left:1217px;top:4px;letter-spacing:-0.33px">Ln 1, Col 1</span>
<span class="a" style="left:1289px;top:4px;letter-spacing:-0.45px">Spaces: 4</span>
<span class="a" style="left:1355px;top:4px;letter-spacing:-0.7px">UTF-8</span>
<span class="a" style="left:1402px;top:4px;letter-spacing:-1.2px">LF</span>
<span class="a" style="left:1429px;top:4px;letter-spacing:-0.37px">JavaScript</span>
<span class="a" style="left:1515px;top:4px;letter-spacing:-0.36px">Go Live</span>
</div>
<!--/PANEL-->

</body></html>
